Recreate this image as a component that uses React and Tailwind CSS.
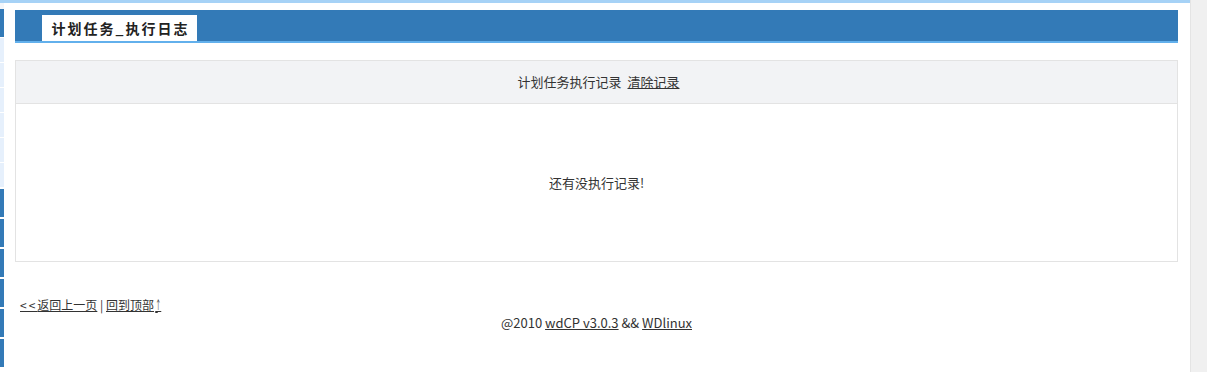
const font = { fontFamily: '"Microsoft YaHei", "Noto Sans CJK SC", "Noto Sans", sans-serif' }

const lightTiles = [0, 1, 2, 3, 4, 5]
const darkTiles = [0, 1, 2, 3, 4, 5]

function SideStrip() {
  return (
    <div className="w-[4px] shrink-0 flex flex-col">
      <div className="h-[9px] bg-[#a6d2f6] border-b-[6px] border-[#f3f6fa]" />
      <div className="h-[28px] bg-[#337ab7]" />
      <div className="flex flex-col gap-[1px] mt-[1px]">
        {lightTiles.map((i) => (
          <div key={i} className="h-[24px] bg-[#e6f0fc]" />
        ))}
      </div>
      <div className="flex flex-col gap-[2px] mt-[2px]">
        {darkTiles.map((i) => (
          <div key={i} className="h-[28px] bg-[#337ab7]" />
        ))}
      </div>
    </div>
  )
}

export default function App() {
  return (
    <div className="flex w-[1207px] h-[372px] overflow-hidden bg-white text-[#333]" style={font}>
      <SideStrip />

      <div className="flex-1 flex flex-col">
        <div className="h-[3px] bg-[#a6d2f6]" />
        <div className="flex-1 pl-[11px] pr-[12px] pt-[7px]">
          {/* title bar */}
          <div className="h-[33px] bg-[#337ab7] border-b-2 border-[#62b0ec] flex items-end pl-[27px]">
            <div className="h-[26px] w-[155px] bg-white flex items-center justify-center pl-[2px] text-[14px] font-bold tracking-[2px] text-[#222]">
              计划任务_执行日志
            </div>
          </div>

          {/* log panel */}
          <div className="mt-[17px] border border-[#e3e3e3]">
            <div className="h-[43px] bg-[#f2f3f5] border-b border-[#e3e3e3] flex items-center justify-center pl-[4px] text-[13px]">
              <span>计划任务执行记录</span>
              <a className="underline ml-[6px] text-[#333]">清除记录</a>
            </div>
            <div className="h-[157px] flex items-center justify-center text-[13px]">
              还有没执行记录!
            </div>
          </div>

          {/* footer */}
          <div className="mt-[34px] pl-[5px] text-[12px] leading-[18px]">
            <a className="underline">
              <span className="tracking-[2px]">&lt;&lt;</span>返回上一页
            </a>{' '}
            |{' '}
            <a className="underline">
              回到顶部
              <span className="inline-block w-[5px] text-center underline border-b border-[#333] leading-[14px] no-underline scale-x-50">↑</span>
            </a>
          </div>
          <div className="text-center text-[13px] leading-[18px] pr-[12px] pl-[12px]">
            @2010 <a className="underline">wdCP v3.0.3</a> &amp;&amp; <a className="underline">WDlinux</a>
          </div>
        </div>
      </div>

      <div className="w-[17px] shrink-0 bg-[#f0f0f0] border-l border-[#e4e4e4]" />
    </div>
  )
}
